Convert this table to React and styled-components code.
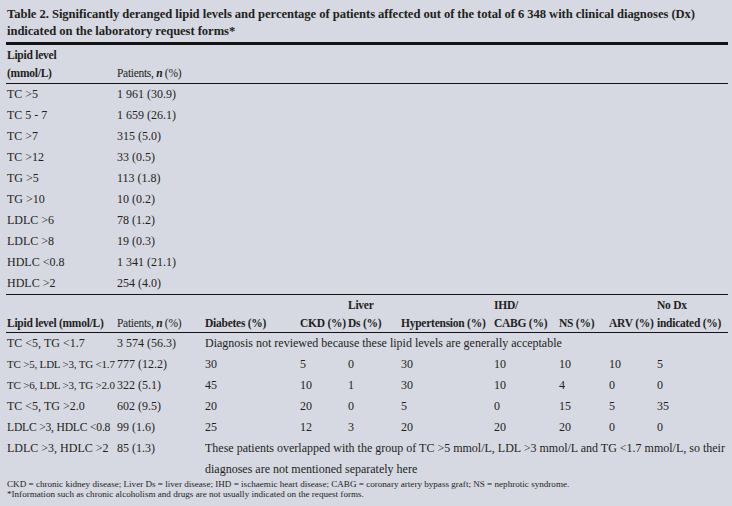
import React from "react";
import styled, { createGlobalStyle } from "styled-components";

const Global = createGlobalStyle`
  html, body { margin: 0; padding: 0; background: #d6d9e2; }
  body { font-family: "Liberation Serif", "Times New Roman", serif; color: #231f20; }
`;

const Page = styled.div`
  width: 732px;
  height: 506px;
  box-sizing: border-box;
  padding: 6px 4px 0 6px;
  background: #d6d9e2;
  overflow: hidden;
  font-family: "Liberation Serif", "Times New Roman", serif;
  color: #231f20;
`;

const Title = styled.h1`
  margin: 0;
  padding: 0 0 0 1px;
  font-size: 12.6px;
  line-height: 17px;
  font-weight: 700;
  height: 36px;
  letter-spacing: -0.05px;
`;

const Table = styled.table`
  width: 722px;
  border-collapse: collapse;
  table-layout: fixed;
  font-family: inherit;
  color: inherit;
  border-top: ${(p) => (p.$thick ? "3px" : "1px")} solid #141414;
`;

const Col = styled.col`
  width: ${(p) => (p.$w ? `${p.$w}px` : "auto")};
`;

const HeadCell = styled.th`
  text-align: left;
  vertical-align: bottom;
  font-weight: 700;
  font-size: 11.5px;
  line-height: 18px;
  letter-spacing: -0.25px;
  padding: ${(p) => (p.$top ? "1px 0 1px 1px" : "1px 0 0 1px")};
  white-space: nowrap;
  border-bottom: 1px solid #141414;
`;

const Em = styled.i`
  font-weight: 700;
`;

const PatientsHead = styled.span`
  font-weight: 400;
  letter-spacing: -0.3px;
`;

const Cell = styled.td`
  font-size: ${(p) => (p.$tight === 2 ? "11px" : p.$tight === 1 ? "11.6px" : "12px")};
  line-height: 21px;
  padding: 0 0 0 1px;
  vertical-align: top;
  white-space: ${(p) => (p.$wrap ? "normal" : "nowrap")};
  letter-spacing: ${(p) => (p.$tight ? "-0.2px" : "0")};
`;

const Notes = styled.div`
  font-size: 9.1px;
  line-height: 10px;
  margin-top: -1px;
  padding-left: 1px;
  white-space: nowrap;
`;

const lipid1 = [
  ["TC >5", "1 961 (30.9)"],
  ["TC 5 - 7", "1 659 (26.1)"],
  ["TC >7", "315 (5.0)"],
  ["TC >12", "33 (0.5)"],
  ["TG >5", "113 (1.8)"],
  ["TG >10", "10 (0.2)"],
  ["LDLC >6", "78 (1.2)"],
  ["LDLC >8", "19 (0.3)"],
  ["HDLC <0.8", "1 341 (21.1)"],
  ["HDLC >2", "254 (4.0)"],
];

const cols2 = [110, 88, 95, 48, 53, 93, 65, 50, 48, 72];

const rows2 = [
  { tight: 2, c: ["TC >5, LDL >3, TG <1.7", "777 (12.2)", "30", "5", "0", "30", "10", "10", "10", "5"] },
  { tight: 2, c: ["TC >6, LDL >3, TG >2.0", "322 (5.1)", "45", "10", "1", "30", "10", "4", "0", "0"] },
  { tight: 0, c: ["TC <5, TG >2.0", "602 (9.5)", "20", "20", "0", "5", "0", "15", "5", "35"] },
  { tight: 1, c: ["LDLC >3, HDLC <0.8", "99 (1.6)", "25", "12", "3", "20", "20", "20", "0", "0"] },
];

const Patients = () => (
  <PatientsHead>
    Patients, <Em>n</Em> (%)
  </PatientsHead>
);

export default function App() {
  return (
    <Page>
      <Global />
      <Title>
        Table 2. Significantly deranged lipid levels and percentage of patients affected out of the total of 6 348 with clinical diagnoses (Dx) indicated on the laboratory request forms*
      </Title>
      <Table $thick>
        <colgroup>
          <Col $w={110} />
          <Col />
        </colgroup>
        <thead>
          <tr>
            <HeadCell $top>
              Lipid level
              <br />
              (mmol/L)
            </HeadCell>
            <HeadCell $top>
              <Patients />
            </HeadCell>
          </tr>
        </thead>
        <tbody>
          {lipid1.map(([a, b]) => (
            <tr key={a}>
              <Cell>{a}</Cell>
              <Cell>{b}</Cell>
            </tr>
          ))}
        </tbody>
      </Table>
      <Table>
        <colgroup>
          {cols2.map((w, i) => (
            <Col key={i} $w={w} />
          ))}
        </colgroup>
        <thead>
          <tr>
            <HeadCell>Lipid level (mmol/L)</HeadCell>
            <HeadCell>
              <Patients />
            </HeadCell>
            <HeadCell>Diabetes (%)</HeadCell>
            <HeadCell>CKD (%)</HeadCell>
            <HeadCell>
              Liver
              <br />
              Ds (%)
            </HeadCell>
            <HeadCell>Hypertension (%)</HeadCell>
            <HeadCell>
              IHD/
              <br />
              CABG (%)
            </HeadCell>
            <HeadCell>NS (%)</HeadCell>
            <HeadCell>ARV (%)</HeadCell>
            <HeadCell>
              No Dx
              <br />
              indicated (%)
            </HeadCell>
          </tr>
        </thead>
        <tbody>
          <tr>
            <Cell>TC &lt;5, TG &lt;1.7</Cell>
            <Cell>3 574 (56.3)</Cell>
            <Cell colSpan={8}>Diagnosis not reviewed because these lipid levels are generally acceptable</Cell>
          </tr>
          {rows2.map((r) => (
            <tr key={r.c[0]}>
              {r.c.map((c, i) => (
                <Cell key={i} $tight={i === 0 ? r.tight : 0}>
                  {c}
                </Cell>
              ))}
            </tr>
          ))}
          <tr>
            <Cell>LDLC &gt;3, HDLC &gt;2</Cell>
            <Cell>85 (1.3)</Cell>
            <Cell colSpan={8} $wrap>
              These patients overlapped with the group of TC &gt;5 mmol/L, LDL &gt;3 mmol/L and TG &lt;1.7 mmol/L, so their diagnoses are not mentioned separately here
            </Cell>
          </tr>
        </tbody>
      </Table>
      <Notes>
        CKD = chronic kidney disease; Liver Ds = liver disease; IHD = ischaemic heart disease; CABG = coronary artery bypass graft; NS = nephrotic syndrome.
        <br />
        *Information such as chronic alcoholism and drugs are not usually indicated on the request forms.
      </Notes>
    </Page>
  );
}
